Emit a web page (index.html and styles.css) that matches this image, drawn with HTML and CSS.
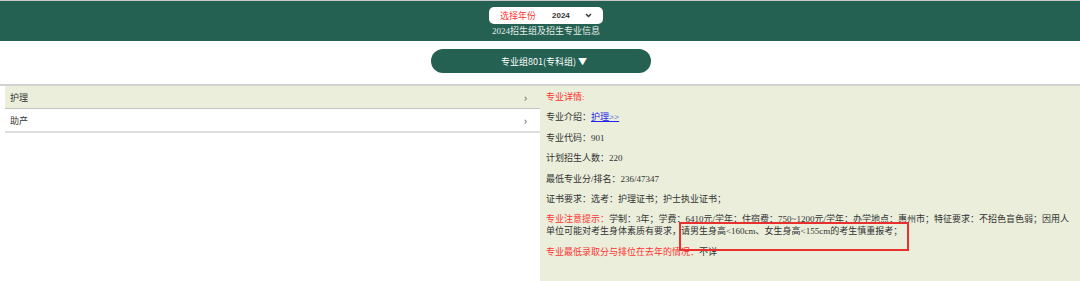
FILE: index.html
```html
<!DOCTYPE html>
<html lang="zh-CN">
<head>
    <meta charset="UTF-8">
    <meta name="viewport" content="width=device-width, initial-scale=1.0">
    <title>招生专业信息</title>
    <link rel="stylesheet" href="styles.css">
</head>
<body>

<div class="top-bar">
    <div class="year-select">
        <span class="year-label">选择年份</span>
        <span class="year-value">2024</span>
        <svg class="year-arrow" width="7" height="5" viewBox="0 0 7 5"><path d="M1 1 L3.5 3.5 L6 1" fill="none" stroke="#333" stroke-width="1.4"/></svg>
    </div>
    <div class="top-title">2024招生组及招生专业信息</div>
</div>

<div class="group-bar">
    <button class="group-btn">专业组801(专科组) ▼</button>
</div>

<div class="main">
    <ul class="major-list">
        <li class="major-item active"><span>护理</span><span class="chev">&rsaquo;</span></li>
        <li class="major-item"><span>助产</span><span class="chev">&rsaquo;</span></li>
    </ul>

    <div class="detail">
        <p class="red">专业详情:</p>
        <p>专业介绍：<a href="#">护理&gt;&gt;</a></p>
        <p>专业代码：901</p>
        <p>计划招生人数：220</p>
        <p>最低专业分/排名：236/47347</p>
        <p>证书要求：选考：护理证书；护士执业证书；</p>
        <p><span class="red">专业注意提示：</span>学制：3年；学费：6410元/学年；住宿费：750~1200元/学年；办学地点：惠州市；特征要求：不招色盲色弱；因用人单位可能对考生身体素质有要求，请男生身高&lt;160cm、女生身高&lt;155cm的考生慎重报考；</p>
        <p><span class="red">专业最低录取分与排位在去年的情况：</span>不详</p>
        <div class="mark"></div>
    </div>
</div>

</body>
</html>
```

FILE: styles.css
```css
body {
    margin: 0;
    font-family: "Liberation Serif", "Noto Sans CJK SC", serif;
    font-size: 9px;
    color: #333;
    background-color: #fff;
}

.top-bar {
    border-top: 1px solid #c8c8c8;
    background-color: #246152;
    height: 40px;
    padding-left: 12px;
    display: flex;
    flex-direction: column;
    align-items: center;
}

.year-select {
    margin-top: 6px;
    width: 114px;
    height: 17px;
    background-color: #fff;
    border-radius: 5px;
    display: flex;
    align-items: center;
    font-family: "Noto Sans CJK SC", sans-serif;
}

.year-label {
    color: #f33;
    margin-left: 11px;
}

.year-value {
    font-weight: bold;
    margin-left: 16px;
    font-family: "Liberation Sans", "Noto Sans CJK SC", sans-serif;
    font-size: 8px;
}

.year-arrow {
    margin-left: 15px;
}

.top-title {
    color: #e6ece8;
    margin-top: 1px;
    line-height: 12px;
}

.group-bar {
    height: 43px;
    border-bottom: 2px solid #d2d2d2;
    display: flex;
    justify-content: center;
}

.group-btn {
    margin-top: 8px;
    margin-left: 2px;
    width: 220px;
    height: 24px;
    border: none;
    border-radius: 12px;
    background-color: #246152;
    color: #fff;
    font-family: "Noto Sans CJK SC", sans-serif;
    font-size: 9px;
    padding: 0 0 0 6px;
}

.main {
    display: flex;
    height: 195px;
}

.major-list {
    list-style: none;
    margin: 0 0 0 5px;
    padding: 0;
    width: 535px;
}

.major-item {
    height: 22px;
    display: flex;
    justify-content: space-between;
    align-items: center;
    padding: 0 13px 0 5px;
    border-bottom: 1px solid #c4c4c4;
    font-family: "Noto Sans CJK SC", sans-serif;
}

.major-item + .major-item {
    border-bottom: 2px solid #dedede;
}

.major-item.active {
    background-color: #eaeedb;
}

.chev {
    font-size: 11px;
    color: #555;
}

.detail {
    position: relative;
    flex: 1;
    background-color: #eaeedb;
    padding: 5px 4px 0 6px;
    display: flex;
    flex-direction: column;
    gap: 8.4px;
}

.detail p {
    margin: 0;
    line-height: 12px;
}

.red {
    color: #f33;
}

.detail a {
    color: #2222ee;
}

.mark {
    position: absolute;
    left: 139px;
    top: 136px;
    width: 226px;
    height: 25px;
    border: 2px solid #e8302f;
}
```
